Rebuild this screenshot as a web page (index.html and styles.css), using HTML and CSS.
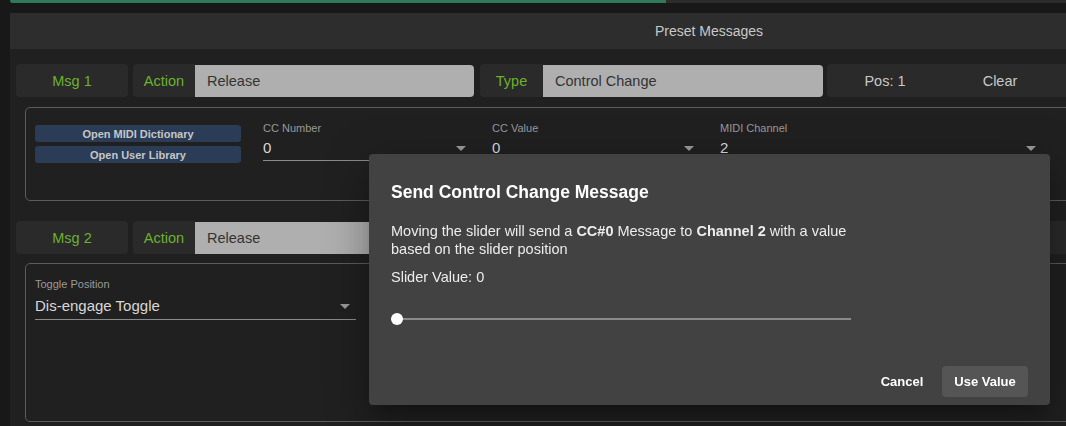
FILE: index.html
```html
<!DOCTYPE html>
<html lang="en">
<head>
    <meta charset="UTF-8">
    <meta name="viewport" content="width=device-width, initial-scale=1.0">
    <title>Preset Messages</title>
    <link rel="stylesheet" href="styles.css">
</head>
<body>
    <div class="progress"><div class="progress-fill" style="width: 46.9%"></div></div>

    <section class="panel">
        <header class="panel-head">Preset Messages</header>
        <div class="panel-body">

            <!-- Message 1 -->
            <div class="msg-row">
                <div class="chip msg">Msg 1</div>
                <div class="group action">
                    <span class="chip">Action</span>
                    <span class="box">Release</span>
                </div>
                <div class="group type">
                    <span class="chip">Type</span>
                    <span class="box">Control Change</span>
                </div>
                <div class="chip pos">
                    <span class="pos-label">Pos: 1</span>
                    <span class="pos-clear">Clear</span>
                </div>
            </div>

            <div class="card card-cc">
                <div class="lib-buttons">
                    <button class="lib-btn">Open MIDI Dictionary</button>
                    <button class="lib-btn">Open User Library</button>
                </div>
                <div class="select cc-number">
                    <label>CC Number</label>
                    <div class="select-value">0 <svg class="arrow" width="10" height="5" viewBox="0 0 10 5"><path d="M0 0h10L5 5z"/></svg></div>
                </div>
                <div class="select cc-value">
                    <label>CC Value</label>
                    <div class="select-value">0 <svg class="arrow" width="10" height="5" viewBox="0 0 10 5"><path d="M0 0h10L5 5z"/></svg></div>
                </div>
                <div class="select midi-channel">
                    <label>MIDI Channel</label>
                    <div class="select-value">2 <svg class="arrow" width="10" height="5" viewBox="0 0 10 5"><path d="M0 0h10L5 5z"/></svg></div>
                </div>
            </div>

            <!-- Message 2 -->
            <div class="msg-row second">
                <div class="chip msg">Msg 2</div>
                <div class="group action">
                    <span class="chip">Action</span>
                    <span class="box">Release</span>
                </div>
                <div class="group type">
                    <span class="chip">Type</span>
                    <span class="box">Toggle</span>
                </div>
                <div class="chip pos">
                    <span class="pos-label">Pos: 2</span>
                    <span class="pos-clear">Clear</span>
                </div>
            </div>

            <div class="card card-toggle">
                <div class="select toggle-pos">
                    <label>Toggle Position</label>
                    <div class="select-value big">Dis-engage Toggle <svg class="arrow" width="10" height="5" viewBox="0 0 10 5"><path d="M0 0h10L5 5z"/></svg></div>
                </div>
            </div>
        </div>
    </section>

    <!-- Send CC dialog -->
    <div class="dialog">
        <h2 class="dialog-title">Send Control Change Message</h2>
        <div class="dialog-content">
            <p>Moving the slider will send a <b>CC#0</b> Message to <b>Channel 2</b> with a value based on the slider position</p>
            <p class="slider-value">Slider Value: 0</p>
            <div class="slider">
                <div class="slider-track"></div>
                <div class="slider-thumb"></div>
            </div>
        </div>
        <div class="dialog-actions">
            <button class="text-btn">Cancel</button>
            <button class="fill-btn">Use Value</button>
        </div>
    </div>
</body>
</html>
```

FILE: styles.css
```css
/* Page */
body {
    margin: 0;
    background: #181818;
    font-family: 'Liberation Sans', Arial, sans-serif;
    color: #ddd;
    overflow: hidden;
}

/* Progress bar on top */
.progress {
    margin-left: 10px;
    width: 1398px;
    height: 3px;
    background: #2b2b2b;
}

.progress-fill {
    height: 100%;
    background: #2f7b57;
    border-radius: 0 0 0 3px;
}

/* Main panel */
.panel {
    margin: 10px 0 0 10px;
    width: 1398px;
    height: 420px;
    background: #202020;
}

.panel-head {
    height: 36px;
    line-height: 36px;
    background: #2d2d2d;
    color: #c8c8c8;
    font-size: 14px;
    text-align: center;
}

.panel-body {
    padding: 15px 0 0 6px;
}

/* Message header row */
.msg-row {
    display: flex;
    gap: 5px;
    height: 33px;
}

.chip {
    display: flex;
    align-items: center;
    justify-content: center;
    background: #2a2a2a;
    border-radius: 4px;
    color: #6cb130;
    font-size: 14.5px;
}

.msg {
    width: 112px;
}

.group {
    display: flex;
}

.group .chip {
    width: 62px;
    border-radius: 4px 0 0 4px;
}

.box {
    display: flex;
    align-items: center;
    width: 279px;
    margin-top: 1px;
    padding-left: 12px;
    box-sizing: border-box;
    background: #afafaf;
    border-radius: 0 4px 4px 0;
    color: #333;
    font-size: 14.5px;
}

.type {
    margin-left: 1px;
}

.type .chip {
    width: 63px;
}

.type .box {
    width: 280px;
}

.pos {
    width: 300px;
    margin-left: -1px;
    justify-content: flex-start;
    color: #c8c8c8;
}

.pos-label {
    width: 116px;
    text-align: center;
}

.pos-clear {
    width: 114px;
    text-align: center;
}

.msg-row.second {
    margin-top: 20px;
}

/* Detail cards */
.card {
    display: flex;
    align-items: flex-start;
    margin: 10px 0 0 9px;
    width: 1370px;
    box-sizing: border-box;
    border: 1px solid #5b5b5b;
    border-radius: 5px;
    padding: 14px 0 0 9px;
}

.card-cc {
    height: 94px;
}

.card-toggle {
    margin-top: 9px;
    height: 159px;
    padding-top: 14px;
}

.lib-buttons {
    display: flex;
    flex-direction: column;
    gap: 4px;
    margin-top: 3px;
    width: 206px;
}

.lib-btn {
    height: 17px;
    padding: 0;
    border: none;
    border-radius: 3px;
    background: #2b3d56;
    color: #c6c6c6;
    font-family: inherit;
    font-size: 11px;
    font-weight: bold;
}

/* Select fields */
.select label {
    display: block;
    font-size: 11px;
    line-height: 13px;
    color: #9a9a9a;
}

.select-value {
    display: flex;
    justify-content: space-between;
    align-items: center;
    margin-top: 4px;
    padding: 0 6px 3px 0;
    border-bottom: 1px solid #8a8a8a;
    font-size: 15px;
    line-height: 18px;
    color: #d8d8d8;
}

.select-value.big {
    margin-top: 6px;
    padding-bottom: 4px;
}

.arrow {
    fill: #9a9a9a;
}

.cc-number {
    margin-left: 22px;
    width: 209px;
}

.cc-value {
    margin-left: 20px;
    width: 208px;
}

.midi-channel {
    margin-left: 20px;
    width: 322px;
}

.toggle-pos {
    width: 321px;
}

/* Dialog */
.dialog {
    position: fixed;
    left: 369px;
    top: 154px;
    width: 681px;
    height: 251px;
    box-sizing: border-box;
    display: flex;
    flex-direction: column;
    background: #424242;
    border-radius: 4px;
    box-shadow: 0 11px 15px -7px rgba(0, 0, 0, 0.25), 0 24px 38px 3px rgba(0, 0, 0, 0.16), 0 9px 46px 8px rgba(0, 0, 0, 0.14);
    color: #fff;
}

.dialog-title {
    margin: 0;
    padding: 27px 22px 0;
    font-size: 17.5px;
    line-height: 22px;
    font-weight: bold;
}

.dialog-content {
    width: 460px;
    padding: 19px 22px 0;
}

.dialog-content p {
    margin: 0;
    width: 480px;
    font-size: 14.5px;
    line-height: 18px;
    color: #ececec;
}

.dialog-content p.slider-value {
    margin-top: 10px;
}

.slider {
    position: relative;
    margin-top: 27px;
    height: 12px;
}

.slider-track {
    position: absolute;
    left: 0;
    right: 0;
    top: 5px;
    height: 2px;
    background: #8a8a8a;
}

.slider-thumb {
    position: absolute;
    left: 0;
    top: 0;
    width: 12px;
    height: 12px;
    border-radius: 50%;
    background: #fff;
}

.dialog-actions {
    display: flex;
    justify-content: flex-end;
    gap: 8px;
    margin-top: auto;
    padding: 0 22px 8px;
}

.text-btn, .fill-btn {
    height: 31px;
    border: none;
    border-radius: 4px;
    font-family: inherit;
    font-size: 13px;
    font-weight: bold;
    color: #fff;
}

.text-btn {
    width: 64px;
    background: none;
}

.fill-btn {
    width: 86px;
    background: #555;
}
```
